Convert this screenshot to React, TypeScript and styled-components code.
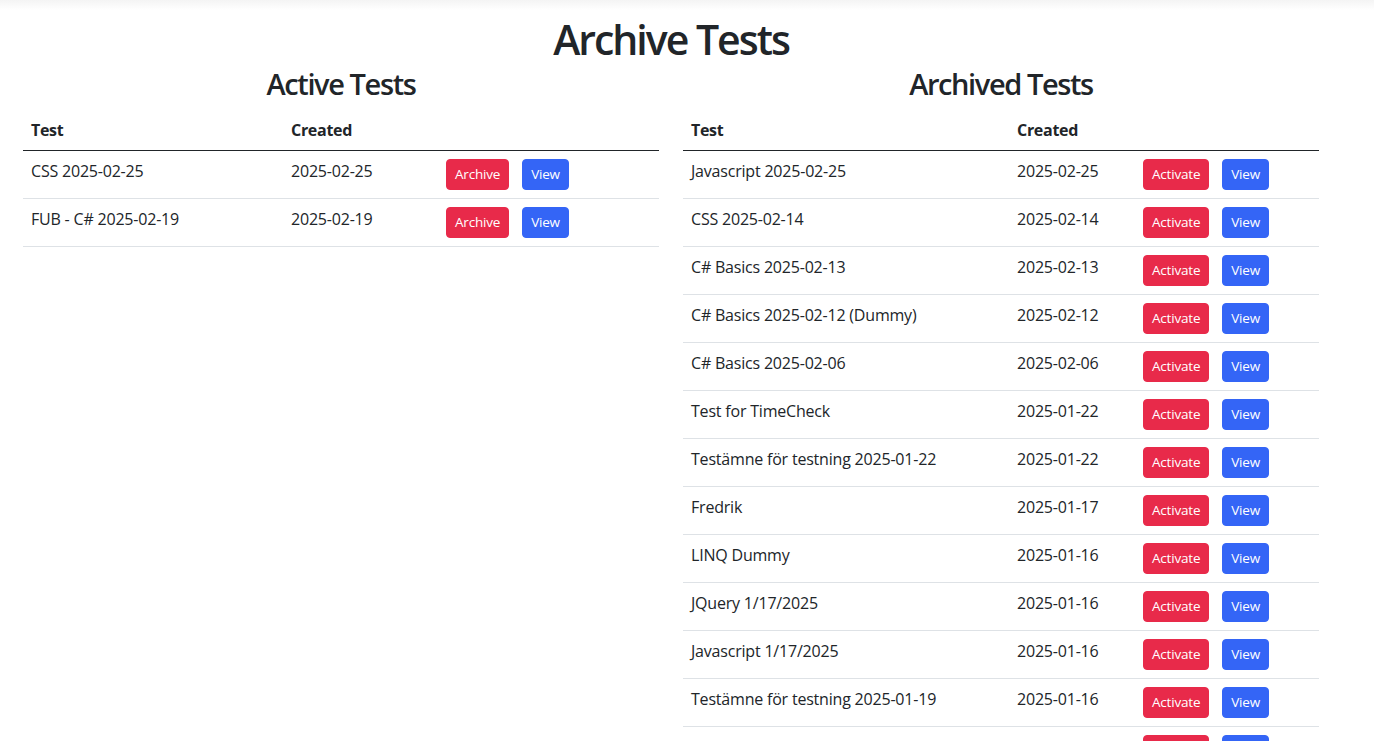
import React from 'react';
import styled, { createGlobalStyle } from 'styled-components';

const GlobalStyle = createGlobalStyle`
  html, body {
    margin: 0;
    padding: 0;
    background: #fff;
    color: #212529;
    font-family: "Segoe UI", "Open Sans", "Noto Sans", sans-serif;
    font-size: 16px;
    line-height: 1.5;
  }
`;

type TestRow = {
  name: string;
  created: string;
};

const activeTests: TestRow[] = [
  { name: 'CSS 2025-02-25', created: '2025-02-25' },
  { name: 'FUB - C# 2025-02-19', created: '2025-02-19' },
];

const archivedTests: TestRow[] = [
  { name: 'Javascript 2025-02-25', created: '2025-02-25' },
  { name: 'CSS 2025-02-14', created: '2025-02-14' },
  { name: 'C# Basics 2025-02-13', created: '2025-02-13' },
  { name: 'C# Basics 2025-02-12 (Dummy)', created: '2025-02-12' },
  { name: 'C# Basics 2025-02-06', created: '2025-02-06' },
  { name: 'Test for TimeCheck', created: '2025-01-22' },
  { name: 'Testämne för testning 2025-01-22', created: '2025-01-22' },
  { name: 'Fredrik', created: '2025-01-17' },
  { name: 'LINQ Dummy', created: '2025-01-16' },
  { name: 'JQuery 1/17/2025', created: '2025-01-16' },
  { name: 'Javascript 1/17/2025', created: '2025-01-16' },
  { name: 'Testämne för testning 2025-01-19', created: '2025-01-16' },
  { name: 'HTML 2025-01-15', created: '2025-01-15' },
];

const TopShade = styled.div`
  height: 10px;
  background: linear-gradient(#f4f4f4, #ffffff);
`;

const Container = styled.main`
  width: 1331px;
  padding-left: 11px;
  box-sizing: border-box;
`;

const PageTitle = styled.h1`
  margin: 5px 0 0;
  font-size: 41px;
  font-weight: 600;
  letter-spacing: -2px;
  line-height: 1.2;
  text-align: center;
`;

const Columns = styled.div`
  display: grid;
  grid-template-columns: 1fr 1fr;
`;

const Column = styled.section`
  padding: 0 12px;
`;

const SectionTitle = styled.h2`
  margin: 3px 0 8px;
  font-size: 29px;
  font-weight: 600;
  letter-spacing: -1.4px;
  line-height: 1.2;
  text-align: center;
`;

const Table = styled.table`
  width: 100%;
  border-collapse: collapse;
  vertical-align: top;
  table-layout: fixed;
`;

const HeadCell = styled.th<{ $width?: number }>`
  box-sizing: border-box;
  width: ${(p) => (p.$width ? `${p.$width}px` : 'auto')};
  padding: 8px;
  text-align: left;
  font-weight: 700;
  letter-spacing: -0.3px;
  border-bottom: 1px solid #212529;
`;

const Row = styled.tr`
  border-bottom: 1px solid #dee2e6;
`;

const Cell = styled.td`
  padding: 8px;
  vertical-align: top;
  white-space: nowrap;
  letter-spacing: -0.2px;
`;

const Button = styled.button<{ $variant: 'danger' | 'primary' }>`
  display: inline-block;
  margin-right: 13px;
  padding: 4px 8px;
  border: 1px solid ${(p) => (p.$variant === 'danger' ? '#e82a4a' : '#3465f6')};
  border-radius: 4px;
  background: ${(p) => (p.$variant === 'danger' ? '#e82a4a' : '#3465f6')};
  color: #fff;
  font-family: inherit;
  font-size: 13.5px;
  letter-spacing: -0.2px;
  line-height: 21px;
  cursor: pointer;
`;

type TestTableProps = {
  title: string;
  rows: TestRow[];
  action: string;
  nameWidth: number;
  createdWidth: number;
};

const TestTable = ({ title, rows, action, nameWidth, createdWidth }: TestTableProps) => (
  <Column>
    <SectionTitle>{title}</SectionTitle>
    <Table>
      <thead>
        <tr>
          <HeadCell $width={nameWidth}>Test</HeadCell>
          <HeadCell $width={createdWidth}>Created</HeadCell>
          <HeadCell />
        </tr>
      </thead>
      <tbody>
        {rows.map((row) => (
          <Row key={row.name}>
            <Cell>{row.name}</Cell>
            <Cell>{row.created}</Cell>
            <Cell>
              <Button $variant="danger">{action}</Button>
              <Button $variant="primary">View</Button>
            </Cell>
          </Row>
        ))}
      </tbody>
    </Table>
  </Column>
);

const App = () => (
  <>
    <GlobalStyle />
    <TopShade />
    <Container>
      <PageTitle>Archive Tests</PageTitle>
      <Columns>
        <TestTable
          title="Active Tests"
          rows={activeTests}
          action="Archive"
          nameWidth={260}
          createdWidth={155}
        />
        <TestTable
          title="Archived Tests"
          rows={archivedTests}
          action="Activate"
          nameWidth={326}
          createdWidth={126}
        />
      </Columns>
    </Container>
  </>
);

export default App;
